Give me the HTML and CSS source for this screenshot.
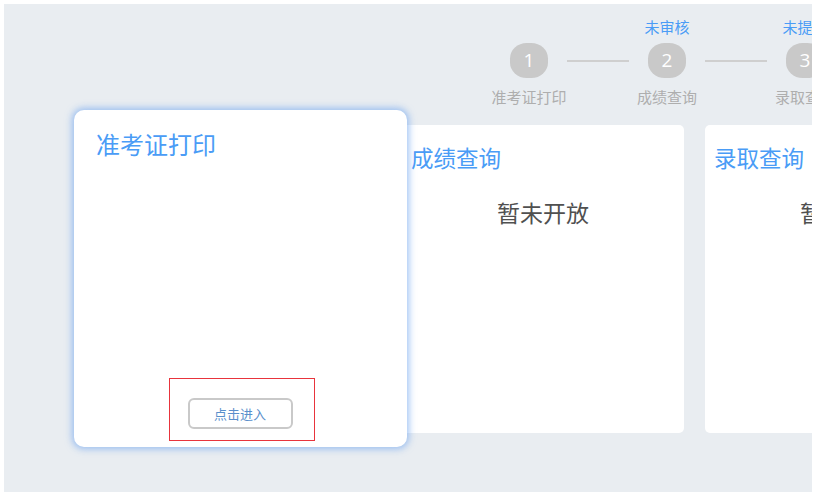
FILE: index.html
```html
<!DOCTYPE html>
<html lang="zh">
<head>
<meta charset="utf-8">
<link rel="stylesheet" href="styles.css">
</head>
<body>
<div class="stage">
  <div class="steps">
    <div class="step">
      <div class="step-top"></div>
      <div class="step-dot">1</div>
      <div class="step-label">准考证打印</div>
    </div>
    <div class="step-line"></div>
    <div class="step">
      <div class="step-top">未审核</div>
      <div class="step-dot">2</div>
      <div class="step-label">成绩查询</div>
    </div>
    <div class="step-line"></div>
    <div class="step">
      <div class="step-top">未提交</div>
      <div class="step-dot">3</div>
      <div class="step-label">录取查询</div>
    </div>
  </div>
  <div class="cards">
    <div class="card card-active">
      <div class="card-title-lg">准考证打印</div>
      <div class="mark">
        <button class="enter-btn">点击进入</button>
      </div>
    </div>
    <div class="card card-behind">
      <div class="card-title">成绩查询</div>
      <div class="card-note">暂未开放</div>
    </div>
    <div class="card">
      <div class="card-title">录取查询</div>
      <div class="card-note">暂未开放</div>
    </div>
  </div>
</div>
</body>
</html>
```
FILE: styles.css
```css
html, body {
  margin: 0;
  padding: 0;
  background: #ffffff;
  font-family: "Noto Sans CJK SC", "Noto Sans", sans-serif;
}
body {
  padding: 4px 7px 0 4px;
  height: 492px;
  box-sizing: border-box;
  overflow: hidden;
}
.stage {
  background: #e9edf1;
  height: 488px;
  overflow: hidden;
  padding-top: 13px;
  box-sizing: border-box;
}
.steps {
  display: flex;
  align-items: flex-start;
  padding-left: 487px;
}
.step {
  width: 76px;
  flex: none;
  display: flex;
  flex-direction: column;
  align-items: center;
}
.step-top {
  height: 20px;
  line-height: 20px;
  font-size: 15px;
  color: #4a9cf6;
  white-space: nowrap;
}
.step-dot {
  margin-top: 6px;
  width: 38px;
  height: 35px;
  border-radius: 44%;
  background: #c9c9c9;
  color: #ffffff;
  font-family: "Open Sans", "Noto Sans", sans-serif;
  font-size: 19px;
  line-height: 35px;
  text-align: center;
}
.step-label {
  margin-top: 9px;
  line-height: 20px;
  font-size: 15px;
  color: #aeaeae;
  white-space: nowrap;
}
.step-line {
  flex: none;
  width: 62px;
  height: 2px;
  background: #cfcfcf;
  margin-top: 43px;
}
.cards {
  display: flex;
  align-items: center;
  margin-top: 3px;
  padding-left: 70px;
}
.card {
  flex: none;
  width: 282px;
  height: 308px;
  background: #ffffff;
  border-radius: 5px;
  box-sizing: border-box;
  padding: 17px 9px 0;
  margin-left: 21px;
}
.card-behind {
  margin-left: -5px;
}
.card-active {
  width: 333px;
  height: 337px;
  border-radius: 10px;
  margin-left: 0;
  position: relative;
  z-index: 1;
  padding: 17px 0 6px;
  box-shadow: 0 0 7px 2px rgba(110, 165, 240, 0.65);
  display: flex;
  flex-direction: column;
  align-items: center;
}
.card-title-lg {
  align-self: stretch;
  padding-left: 22px;
  font-size: 24px;
  line-height: 34px;
  color: #4a9cf6;
}
.card-title {
  font-size: 22.5px;
  line-height: 30px;
  color: #4a9cf6;
}
.card-note {
  margin-top: 25px;
  text-align: center;
  font-size: 23px;
  line-height: 30px;
  color: #505050;
}
.mark {
  margin-top: auto;
  border: 1.5px solid #e8343c;
  padding: 19px 21px 11px 18px;
  margin-left: 2px;
}
.enter-btn {
  display: block;
  width: 105px;
  height: 31px;
  background: #ffffff;
  border: 2px solid #c9c9c9;
  border-radius: 6px;
  font-family: "Noto Sans CJK SC", sans-serif;
  font-size: 13px;
  color: #5a8fcb;
  padding: 0;
  cursor: pointer;
}
```
